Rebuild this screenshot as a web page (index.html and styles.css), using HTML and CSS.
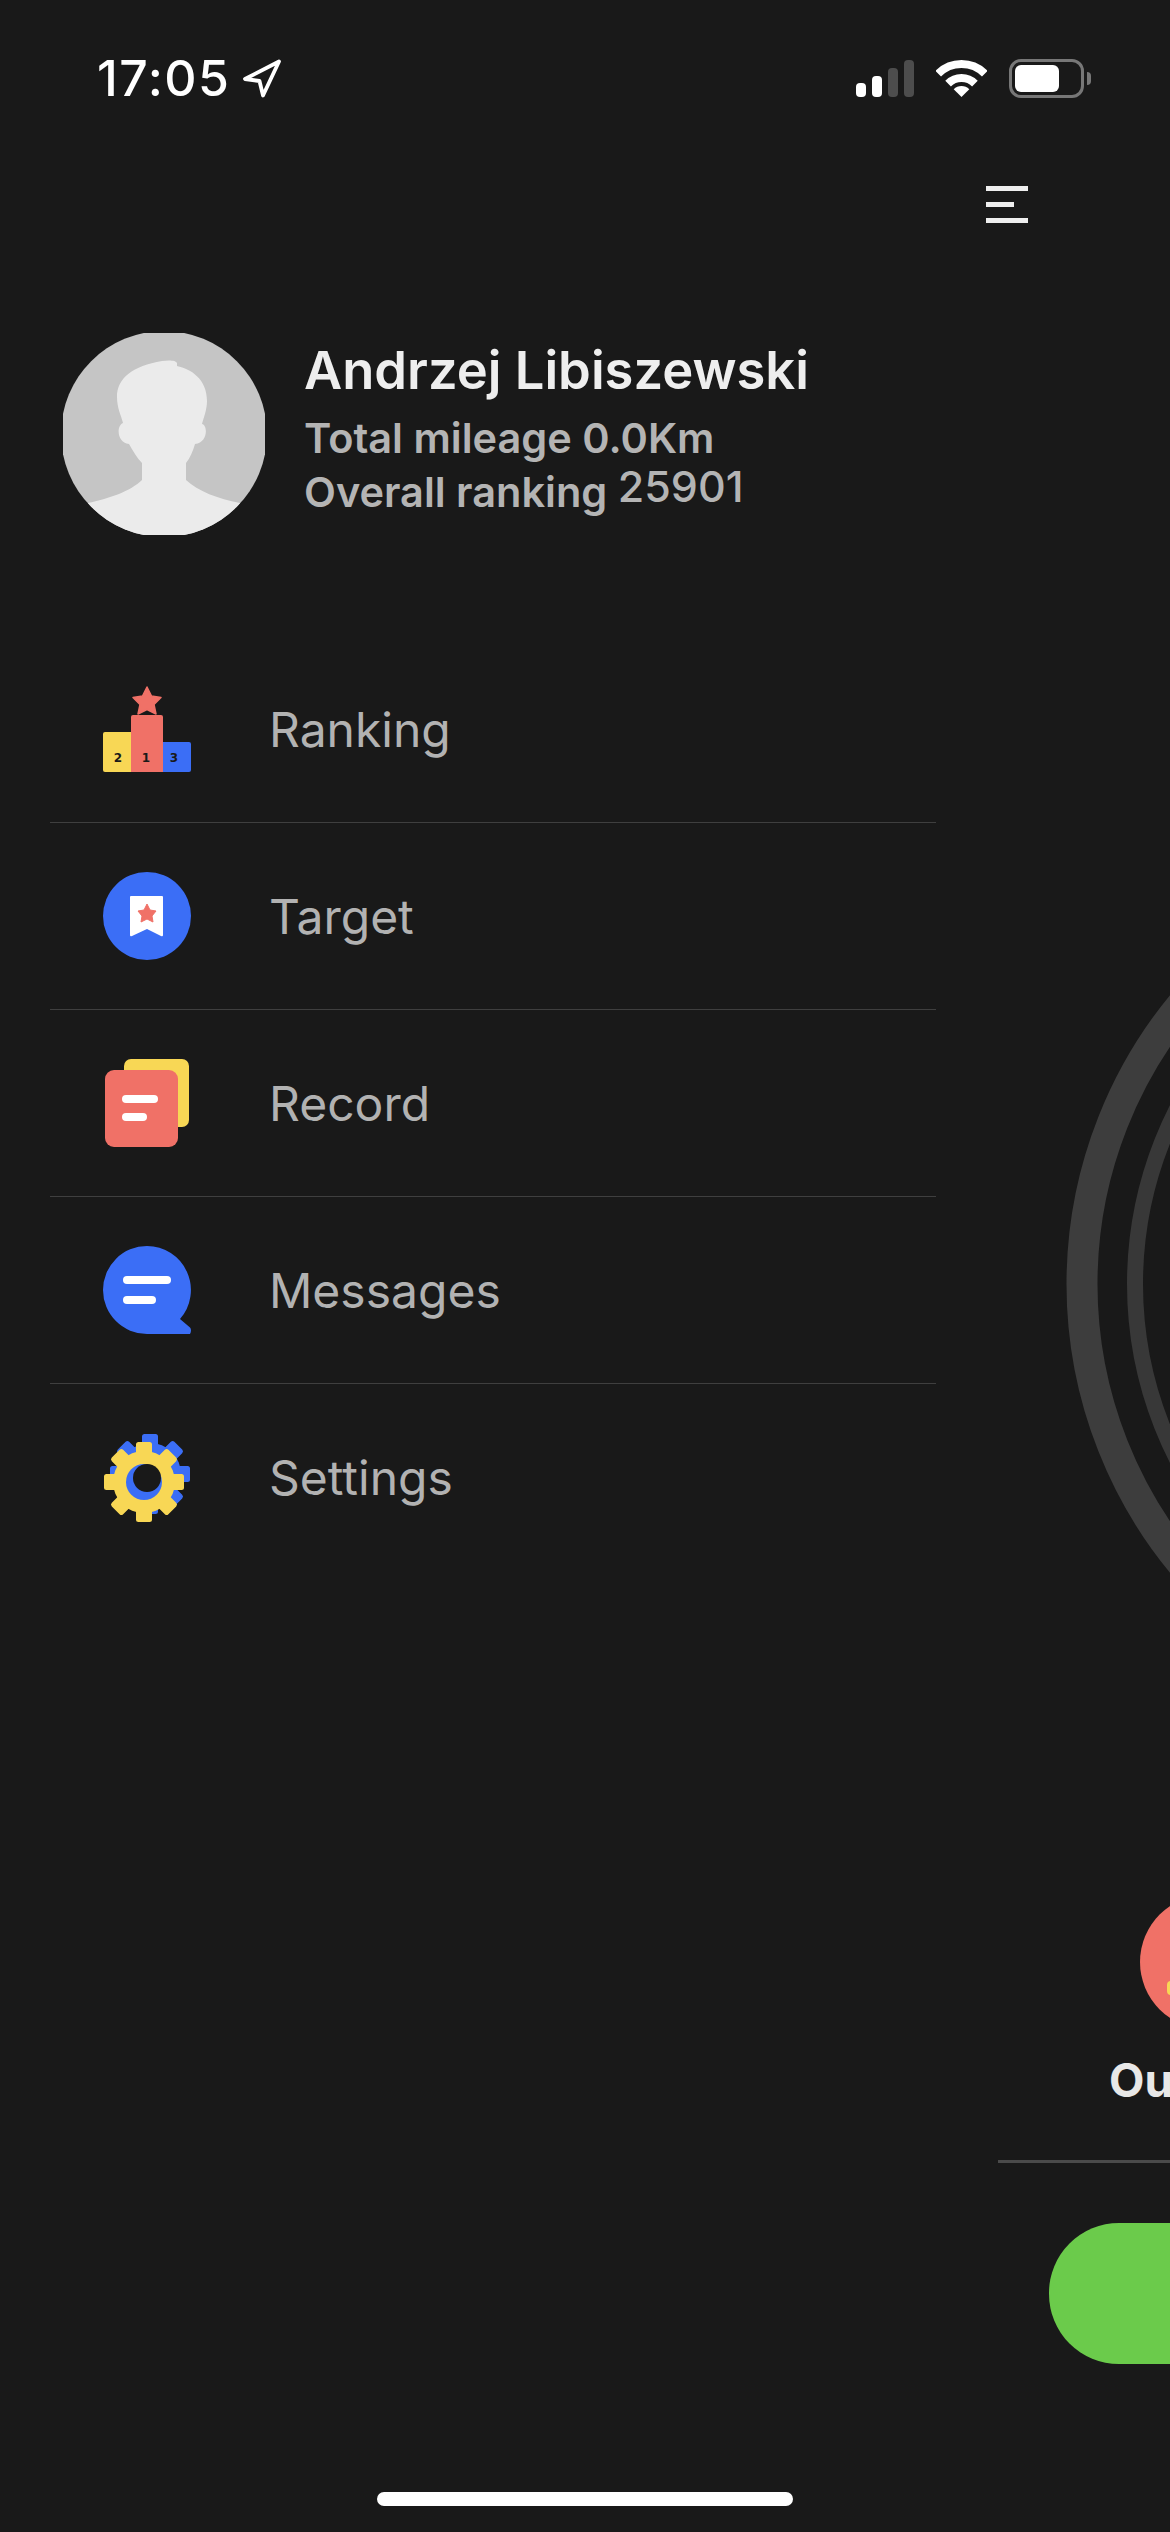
FILE: index.html
```html
<!DOCTYPE html>
<html>
<head>
    <meta charset="UTF-8">
    <meta name="viewport" content="width=device-width, initial-scale=1.0">
    <title>Andrzej Libiszewski</title>
    <link rel="stylesheet" href="styles.css">
</head>
<body>
    <div class="page">
        <div class="status-bar">
            <div class="status-left">
                <span class="clock">17:05</span>
                <svg class="arrow-icon" viewBox="0 0 40 39"><path d="M37 2.500 L3 20 L17.500 22 L21 36.500 Z" fill="none" stroke="#fff" stroke-width="3.800" stroke-linejoin="round"/></svg>
            </div>
            <div class="status-right">
                <div class="signal">
                    <span class="bar bar-1"></span>
                    <span class="bar bar-2"></span>
                    <span class="bar bar-3 off"></span>
                    <span class="bar bar-4 off"></span>
                </div>
                <svg class="wifi-icon" viewBox="0 0 51 37">
                    <path d="M2.2 13.7 A33 33 0 0 1 48.8 13.7" fill="none" stroke="#fff" stroke-width="8"/>
                    <path d="M12.1 23.6 A19 19 0 0 1 38.9 23.6" fill="none" stroke="#fff" stroke-width="8"/>
                    <path d="M25.5 37 L17.7 29.2 A11 11 0 0 1 33.3 29.2 Z" fill="#fff"/>
                </svg>
                <div class="battery">
                    <div class="battery-body"><div class="battery-level"></div></div>
                    <div class="battery-nub"></div>
                </div>
            </div>
        </div>

        <div class="content">
            <div class="drawer">
                <div class="profile">
                    <svg class="avatar" viewBox="0 0 202 202">
                        <defs>
                            <clipPath id="avatarClip"><circle cx="101" cy="101" r="103"/></clipPath>
                        </defs>
                        <g clip-path="url(#avatarClip)">
                            <rect width="202" height="202" fill="#c5c5c5"/>
                            <path d="M114 33 C128 36 144 46 144 68 C144 76 141 84 139 91 C145 92 145 110 132 111 C130 118 127 125 123 130 L123 147 C135 158 155 166 177 170 L195 202 L7 202 L25 170 C45 166 68 158 79 147 L79 130 C74 125 70 118 66 111 C54 110 53 93 60 90 C58 82 54 75 54 64 C54 45 70 33 99 28 C105 27 113 27 114 30 Z" fill="#ebebeb"/>
                        </g>
                    </svg>
                    <div class="profile-text">
                        <div class="profile-name">Andrzej Libiszewski</div>
                        <div class="profile-stat">Total mileage 0.0Km</div>
                        <div class="profile-stat">Overall ranking <span class="rank-value">25901</span></div>
                    </div>
                </div>

                <div class="menu">
                    <div class="menu-row">
                        <svg class="menu-icon" viewBox="0 -2 88 88">
                            <path d="M44 0 L48.5 9 L58 10.5 L51 17.500 L53 27 L44 22.500 L35 27 L37 17.500 L30 10.500 L39.500 9 Z" fill="#f07167" stroke="#f07167" stroke-width="1.500" stroke-linejoin="round"/>
                            <path d="M0 47 Q0 45 2 45 L28 45 L28 85 L2 85 Q0 85 0 83 Z" fill="#f8d755"/>
                            <path d="M60 55 L86 55 Q88 55 88 57 L88 83 Q88 85 86 85 L60 85 Z" fill="#3b6ef6"/>
                            <path d="M28 30 Q28 28 30 28 L58 28 Q60 28 60 30 L60 85 L28 85 Z" fill="#f07167"/>
                            <text class="podium-digit" x="15" y="75">2</text>
                            <text class="podium-digit" x="43" y="75">1</text>
                            <text class="podium-digit" x="71" y="75">3</text>
                        </svg>
                        <span class="menu-label">Ranking</span>
                    </div>
                    <div class="menu-row">
                        <svg class="menu-icon" viewBox="0 0 88 88">
                            <circle cx="44" cy="44" r="44" fill="#3b6ef6"/>
                            <path d="M27 25 Q27 24 28 24 L59 24 Q60 24 60 25 L60 63 Q60 65 58 64 L44 57 L29 64 Q27 65 27 63 Z" fill="#fff"/>
                            <path d="M44 32 L47 38 L53 39 L49 44 L50 50 L44 47 L38 50 L39 44 L35 39 L41 38 Z" fill="#f07167" stroke="#f07167" stroke-linejoin="round"/>
                        </svg>
                        <span class="menu-label">Target</span>
                    </div>
                    <div class="menu-row">
                        <svg class="menu-icon" viewBox="0 0 88 88">
                            <rect x="21" y="0" width="65" height="68" rx="7" fill="#f8d755"/>
                            <rect x="2" y="11" width="73" height="77" rx="9" fill="#f07167"/>
                            <rect x="19" y="36" width="36" height="8" rx="4" fill="#fff"/>
                            <rect x="19" y="54" width="25" height="8" rx="4" fill="#fff"/>
                        </svg>
                        <span class="menu-label">Record</span>
                    </div>
                    <div class="menu-row">
                        <svg class="menu-icon" viewBox="0 0 88 88">
                            <path d="M44 0 A44 44 0 0 1 77 73 L87 81.500 Q89 84 87 88 L44 88 A44 44 0 0 1 44 0 Z" fill="#3b6ef6"/>
                            <rect x="20" y="30" width="48" height="8" rx="4" fill="#fff"/>
                            <rect x="20" y="50" width="33" height="8" rx="4" fill="#fff"/>
                        </svg>
                        <span class="menu-label">Messages</span>
                    </div>
                    <div class="menu-row">
                        <svg class="menu-icon" viewBox="0 0 88 88">
                            <defs>
                                <g id="gear">
                                    <circle cx="0" cy="0" r="31"/>
                                    <rect x="-8" y="-40" width="16" height="80" rx="2.500"/>
                                    <rect x="-8" y="-40" width="16" height="80" rx="2.500" transform="rotate(45)"/>
                                    <rect x="-8" y="-40" width="16" height="80" rx="2.500" transform="rotate(90)"/>
                                    <rect x="-8" y="-40" width="16" height="80" rx="2.500" transform="rotate(135)"/>
                                </g>
                            </defs>
                            <use href="#gear" x="47" y="40" fill="#3b6ef6"/>
                            <use href="#gear" x="41" y="48" fill="#f8d755"/>
                            <circle cx="41" cy="48" r="18" fill="#3b6ef6"/>
                            <circle cx="44" cy="44" r="14" fill="#191919"/>
                        </svg>
                        <span class="menu-label">Settings</span>
                    </div>
                </div>
            </div>

            <div class="peek">
                <div class="hamburger">
                    <span class="line"></span>
                    <span class="line short"></span>
                    <span class="line"></span>
                </div>
                <svg class="rings" viewBox="0 0 190 912">
                    <circle cx="541" cy="456" r="439" fill="none" stroke="#3d3d3d" stroke-width="31"/>
                    <circle cx="541" cy="456" r="386" fill="none" stroke="#383838" stroke-width="16"/>
                </svg>
                <svg class="mode-icon" viewBox="0 0 134 134">
                    <circle cx="67" cy="67" r="67" fill="#f07167"/>
                    <rect x="27" y="86" width="40" height="14" rx="4" fill="#f8d755"/>
                </svg>
                <div class="mode-label">Outdoor</div>
                <div class="peek-divider"></div>
                <div class="start-button"></div>
            </div>
        </div>

        <div class="home-indicator"></div>
    </div>
</body>
</html>
```

FILE: styles.css
```css
* {
    box-sizing: border-box;
}

html, body {
    margin: 0;
    padding: 0;
    background-color: #191919;
}

body {
    font-family: Inter, "Noto Sans", sans-serif;
}

.page {
    display: flex;
    flex-direction: column;
    width: 1170px;
    height: 2532px;
    overflow: hidden;
}

/* status bar */
.status-bar {
    display: flex;
    justify-content: space-between;
    align-items: center;
    height: 156px;
    padding: 0 79px 0 97px;
}

.status-left {
    display: flex;
    align-items: center;
    gap: 12px;
}

.clock {
    color: #fff;
    font-size: 50px;
    font-weight: 500;
    letter-spacing: 1.5px;
}

.arrow-icon {
    width: 40px;
    height: 39px;
}

.status-right {
    display: flex;
    align-items: center;
    gap: 22px;
}

.signal {
    display: flex;
    align-items: flex-end;
    gap: 6px;
    height: 37px;
}

.bar {
    width: 10px;
    border-radius: 4px;
    background-color: #fff;
}

.bar.off {
    background-color: #4d4d4d;
}

.bar-1 { height: 14px; }
.bar-2 { height: 21px; }
.bar-3 { height: 29px; }
.bar-4 { height: 37px; }

.wifi-icon {
    width: 51px;
    height: 37px;
}

.battery {
    display: flex;
    align-items: center;
    gap: 3px;
}

.battery-body {
    width: 75px;
    height: 39px;
    padding: 3px;
    border: 3px solid #777;
    border-radius: 12px;
}

.battery-level {
    width: 44px;
    height: 27px;
    border-radius: 6px;
    background-color: #fff;
}

.battery-nub {
    width: 4px;
    height: 13px;
    border-radius: 0 4px 4px 0;
    background-color: #777;
}

/* layout */
.content {
    display: flex;
    flex: 1;
    min-height: 0;
}

.drawer {
    width: 980px;
    padding: 177px 44px 0 50px;
}

.peek {
    flex: 1;
    min-width: 0;
    padding-top: 30px;
    overflow: hidden;
}

/* profile */
.profile {
    display: flex;
    gap: 39px;
    padding-left: 13px;
}

.avatar {
    flex-shrink: 0;
    width: 202px;
    height: 202px;
}

.profile-text {
    padding-top: 7px;
    white-space: nowrap;
}

.profile-name {
    margin-bottom: 11px;
    color: #eee;
    font-size: 52.5px;
    font-weight: 600;
    line-height: 60px;
}

.profile-stat {
    color: #b4b4b4;
    font-size: 41.5px;
    font-weight: 600;
    line-height: 54px;
}

.rank-value {
    font-size: 43px;
    font-weight: 500;
    line-height: 0;
    vertical-align: 5px;
}

/* menu */
.menu {
    margin-top: 101px;
}

.menu-row {
    display: flex;
    align-items: center;
    gap: 78px;
    height: 187px;
    padding-left: 53px;
    border-bottom: 1px solid #3f3f3f;
}

.menu-row:last-child {
    border-bottom: none;
}

.menu-icon {
    flex-shrink: 0;
    width: 88px;
    height: 88px;
}

.menu-label {
    color: #b2b2b2;
    font-size: 48px;
}

.podium-digit {
    fill: #191919;
    font-family: "DejaVu Sans", sans-serif;
    font-size: 12px;
    font-weight: 700;
    text-anchor: middle;
}

/* part of the main screen showing past the drawer */
.hamburger {
    display: flex;
    flex-direction: column;
    gap: 11px;
    width: 42px;
    margin: 0 0 605px 6px;
}

.line {
    height: 5px;
    background-color: #eee;
}

.line.short {
    width: 28px;
}

.rings {
    display: block;
    width: 190px;
    height: 912px;
}

.mode-icon {
    display: block;
    width: 134px;
    height: 134px;
    margin: 155px 0 0 160px;
    overflow: visible;
}

.mode-label {
    margin: 23px 0 0 129px;
    color: #e8e8e8;
    font-size: 46px;
    font-weight: 700;
    line-height: 56px;
    white-space: nowrap;
}

.peek-divider {
    height: 3px;
    margin: 52px 0 0 18px;
    background-color: #4a4a4a;
}

.start-button {
    width: 500px;
    height: 141px;
    margin: 60px 0 0 69px;
    border-radius: 70px;
    background-color: #6bcb4b;
}

.home-indicator {
    flex-shrink: 0;
    width: 416px;
    height: 14px;
    margin: 0 auto 26px;
    border-radius: 7px;
    background-color: #fff;
}
```
